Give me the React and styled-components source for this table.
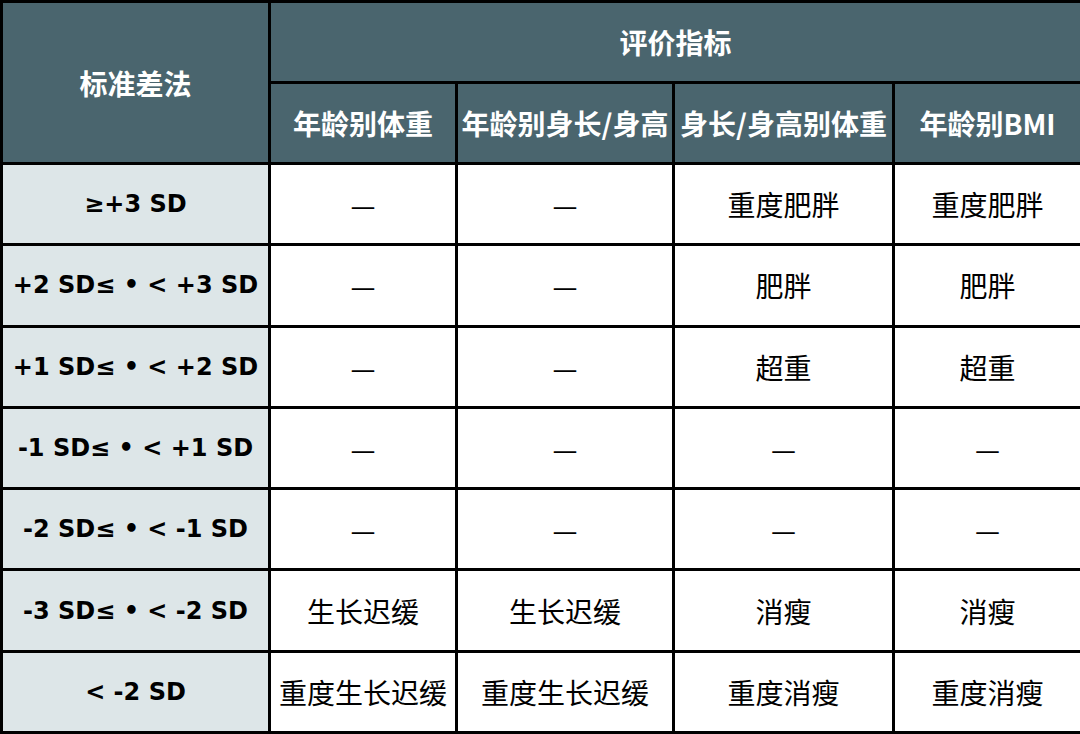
import React from "react";
import styled, { createGlobalStyle } from "styled-components";

const GlobalStyle = createGlobalStyle`
  html, body {
    margin: 0;
    padding: 0;
    background: #ffffff;
  }
  body {
    font-family: "Noto Sans CJK SC", "Noto Sans", sans-serif;
  }
`;

const Table = styled.table`
  width: 1080px;
  height: 734px;
  border-collapse: collapse;
  table-layout: fixed;
`;

const HeadCell = styled.th`
  background: #4a656e;
  color: #ffffff;
  border: 3px solid #000;
  font-size: 28px;
  font-weight: 700;
  line-height: 1;
  text-align: center;
  padding: 0;
  height: 78px;
  white-space: nowrap;
`;

const LabelCell = styled.td`
  background: #dde6e8;
  color: #000;
  border: 3px solid #000;
  font-family: "DejaVu Sans", "Noto Sans CJK SC", sans-serif;
  font-size: 24px;
  font-weight: 700;
  text-align: center;
  padding: 0;
  white-space: pre;
`;

const Cell = styled.td`
  background: #ffffff;
  color: #000;
  border: 3px solid #000;
  font-size: 28px;
  font-weight: 400;
  line-height: 1;
  text-align: center;
  padding: 0;
  white-space: nowrap;
`;

const Row = styled.tr`
  height: 81px;
`;

const D = "—";

const rows = [
  ["≥+3 SD", D, D, "重度肥胖", "重度肥胖"],
  ["+2 SD≤ • < +3 SD", D, D, "肥胖", "肥胖"],
  ["+1 SD≤ • < +2 SD", D, D, "超重", "超重"],
  ["-1 SD≤ • < +1 SD", D, D, D, D],
  ["-2 SD≤ • < -1 SD", D, D, D, D],
  ["-3 SD≤ • < -2 SD", "生长迟缓", "生长迟缓", "消瘦", "消瘦"],
  ["< -2 SD", "重度生长迟缓", "重度生长迟缓", "重度消瘦", "重度消瘦"],
];

export default function App() {
  return (
    <>
      <GlobalStyle />
      <Table>
        <colgroup>
          <col style={{ width: 268 }} />
          <col style={{ width: 187 }} />
          <col style={{ width: 217 }} />
          <col style={{ width: 220 }} />
          <col style={{ width: 188 }} />
        </colgroup>
        <thead>
          <tr>
            <HeadCell rowSpan={2}>标准差法</HeadCell>
            <HeadCell colSpan={4}>评价指标</HeadCell>
          </tr>
          <tr>
            <HeadCell>年龄别体重</HeadCell>
            <HeadCell>年龄别身长/身高</HeadCell>
            <HeadCell>身长/身高别体重</HeadCell>
            <HeadCell>年龄别BMI</HeadCell>
          </tr>
        </thead>
        <tbody>
          {rows.map((r) => (
            <Row key={r[0]}>
              <LabelCell>{r[0]}</LabelCell>
              {r.slice(1).map((c, i) => (
                <Cell key={i}>{c}</Cell>
              ))}
            </Row>
          ))}
        </tbody>
      </Table>
    </>
  );
}
